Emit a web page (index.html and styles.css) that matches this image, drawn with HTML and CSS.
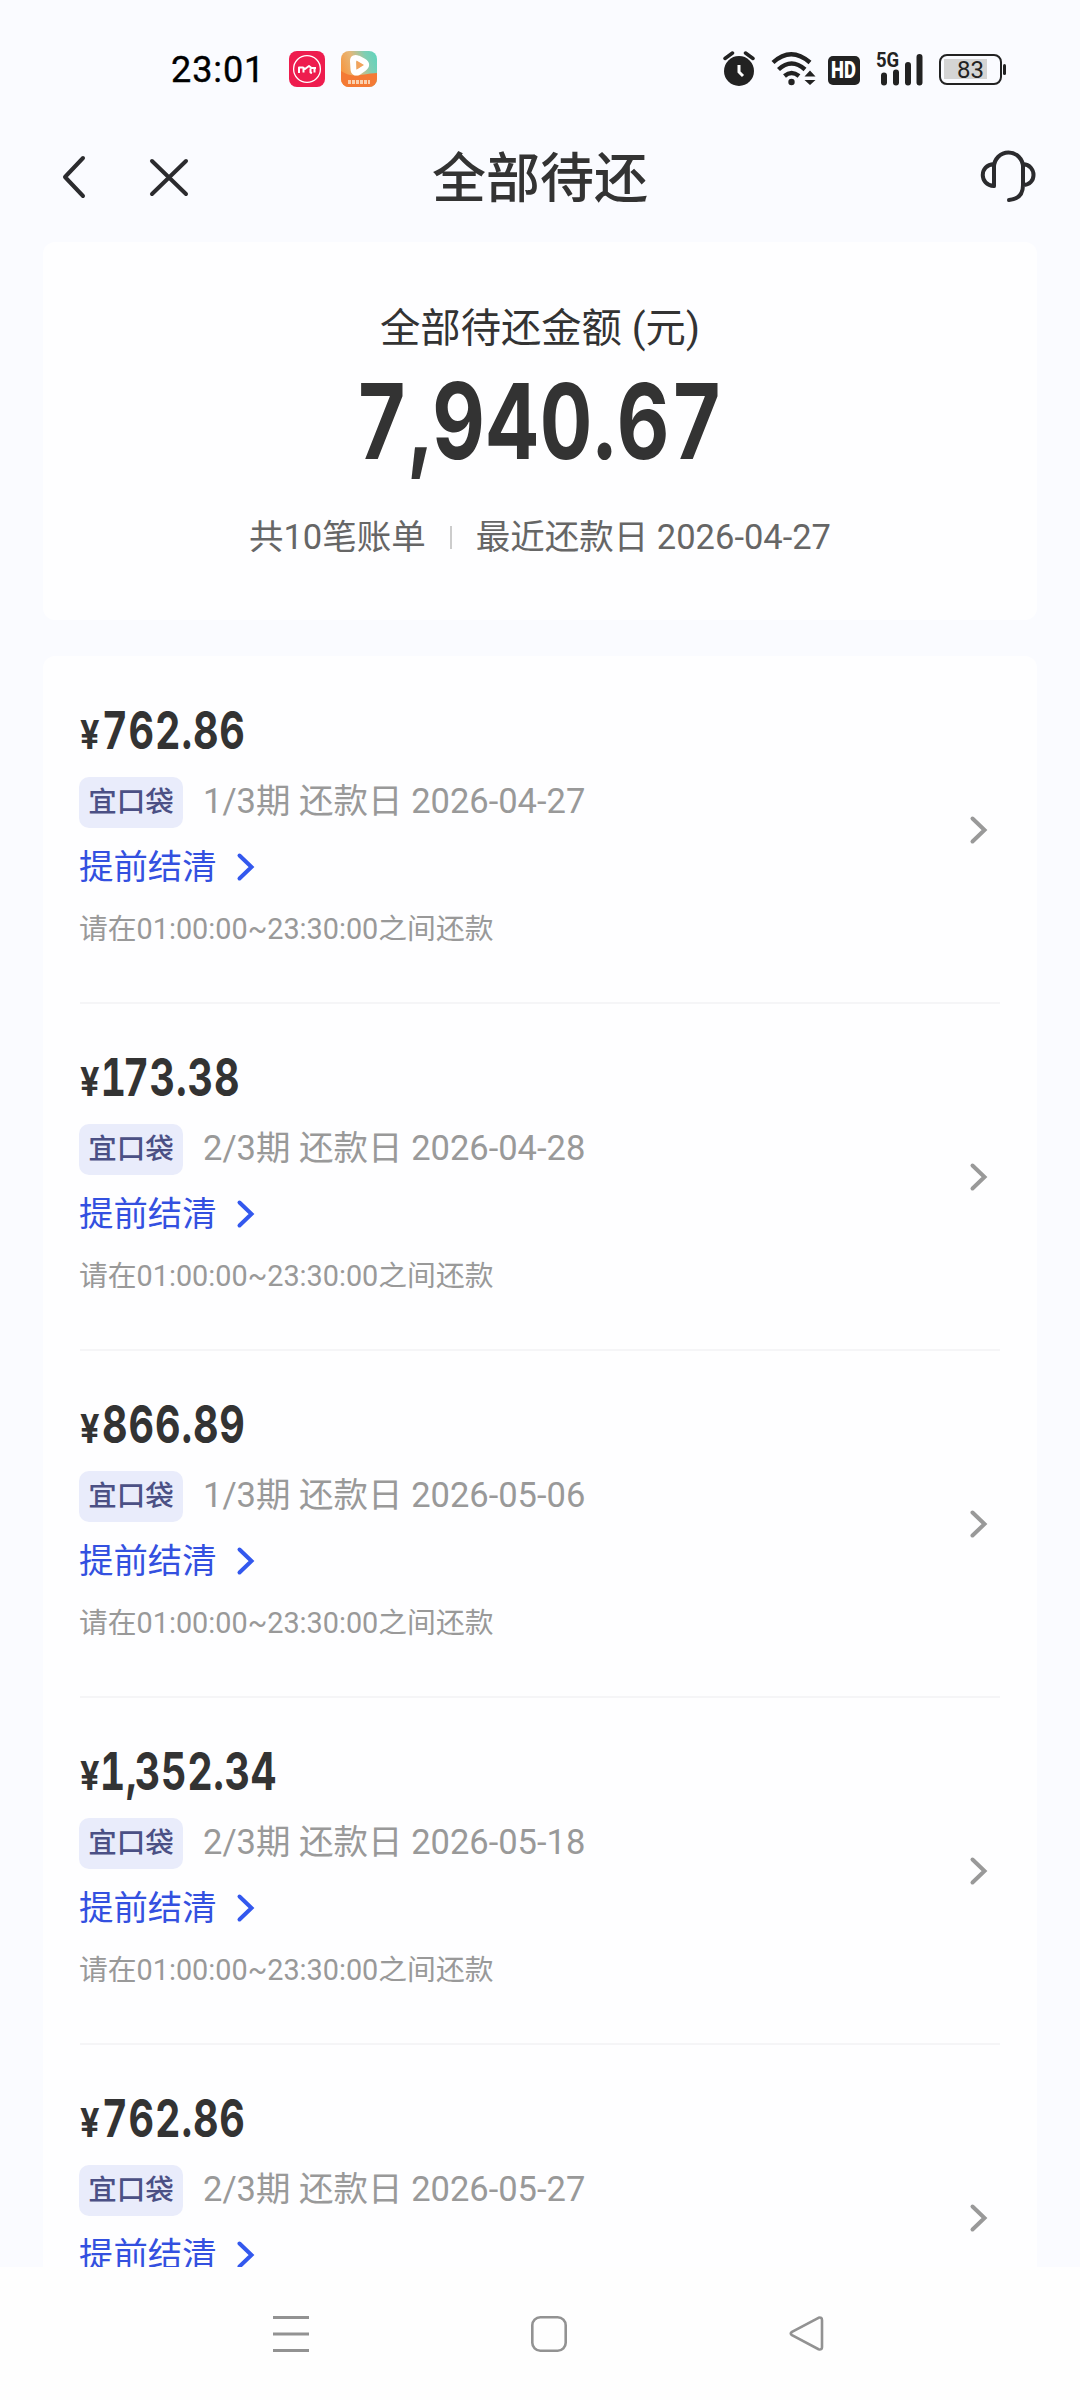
FILE: index.html
```
<!DOCTYPE html>
<html lang="zh-CN">
<head>
<meta charset="utf-8">
<title>全部待还</title>
<link rel="stylesheet" href="styles.css">
</head>
<body>
<svg class="defs" width="0" height="0">
  <symbol id="chevron" viewBox="0 0 20 32"><path d="M3.5 4.5 15.500 16 3.500 27.500" fill="none" stroke="currentColor" stroke-width="4" stroke-linecap="round" stroke-linejoin="miter"/></symbol>
</svg>
<div class="screen">
  <div class="status">
    <span class="clock">23:01</span>
    <svg class="app-pink" width="36" height="36" viewBox="0 0 36 36">
      <rect width="36" height="36" rx="8" fill="#ee1c4e"/>
      <circle cx="18" cy="18" r="13.400" fill="none" stroke="#fff" stroke-width="1.300"/>
      <path d="M10 22v-5.500h4l2 1.500 4-3 2.500 2H27M14.500 17v4.500M21.500 17.500v4l1.500.500M25.500 17v4.500" fill="none" stroke="#fff" stroke-width="2" stroke-linejoin="round"/>
    </svg>
    <svg class="app-orange" width="36" height="36" viewBox="0 0 36 36">
      <defs><linearGradient id="sun" x1="0" y1=".6" x2="1" y2=".2"><stop offset="0" stop-color="#f8943c"/><stop offset=".4" stop-color="#e6b778"/><stop offset=".75" stop-color="#7fceb4"/><stop offset="1" stop-color="#63d3bc"/></linearGradient>
      <clipPath id="tile"><rect width="36" height="36" rx="8"/></clipPath></defs>
      <g clip-path="url(#tile)"><rect width="36" height="36" fill="url(#sun)"/>
      <path d="M0 20q9 6 20 4t16-2v14H0z" fill="#f47a35"/></g>
      <path d="M12 10c0-3 2-3.500 5-2.500l5.500 3c3.500 2 3.500 4.500 0 7l-5 3.500c-3 1.500-5 0-5-3z" fill="none" stroke="#fff" stroke-width="6" stroke-linejoin="round"/>
      <path d="M15.500 9.500v9l7.500-4.500z" fill="#f3a35c"/>
      <path d="M7 31h22" stroke="#fbd0ae" stroke-width="4" stroke-dasharray="3 1"/>
    </svg>
    <div class="status-right">
      <svg width="32" height="36" viewBox="0 0 32 36"><circle cx="16" cy="20" r="15" fill="#222"/><path d="M2 7.500 9.500 2M22.500 2 30 7.500" stroke="#222" stroke-width="3.500" stroke-linecap="round"/><path d="M16 14v7l4 4" fill="none" stroke="#fff" stroke-width="3"/></svg>
      <svg class="wifi" width="46" height="36" viewBox="0 0 46 36"><g fill="none" stroke="#222" stroke-width="4.400"><path d="M2 11.500q18-16.500 37 0"/><path d="M7.500 18.500q13-12 26.500 0"/><path d="M13.500 25q7-6 14.500 0"/></g><circle cx="20.500" cy="31" r="3.200" fill="#222"/><path d="m39 19.500 5.500 6h-11zM39 34l-5.500-5h11z" fill="#222"/></svg>
      <span class="hd"><b>HD</b></span>
      <div class="signal">
        <span class="gen">5G</span>
        <svg width="46" height="34" viewBox="0 0 46 34"><path d="M7 23.500v7M19 20.500v10M31 13v17.500M42.500 5v25.500" stroke="#222" stroke-width="6" stroke-linecap="round"/></svg>
      </div>
      <div class="battery"><span>83</span></div>
      <i class="nub"></i>
    </div>
  </div>
  <header class="bar">
    <svg width="30" height="46" viewBox="0 0 30 46"><path d="M25 4 7 23 25 42" fill="none" stroke="#2b2b2e" stroke-width="4" stroke-linecap="round" stroke-linejoin="round"/></svg>
    <svg class="close" width="42" height="42" viewBox="0 0 42 42"><path d="m4 5 34 33M38 5 4 38" stroke="#2b2b2e" stroke-width="4" stroke-linecap="round"/></svg>
    <h1>全部待还</h1>
    <svg class="service" width="56" height="56" viewBox="0 0 56 56"><path d="M14 38V19a14.500 14.500 0 0 1 29 0v18q0 14-14 15M14 38C-1 37-1 17 14 16M43 16c14 1 14 21 0 21" fill="none" stroke="#2b2b2e" stroke-width="4" stroke-linecap="round" stroke-linejoin="round"/></svg>
  </header>
  <main>
    <section class="card summary">
      <p class="label">全部待还金额 (元)</p>
      <p class="total">7,940.67</p>
      <p class="meta"><span>共10笔账单</span><i></i><span>最近还款日 2026-04-27</span></p>
    </section>
    <section class="card bills">
      <article class="bill">
        <div class="body">
          <p class="amount"><small>¥</small><b>762.86</b></p>
          <p class="term"><span class="tag">宜口袋</span><span>1/3期 还款日 2026-04-27</span></p>
          <p class="settle">提前结清<svg width="20" height="32"><use href="#chevron"/></svg></p>
          <p class="note">请在01:00:00~23:30:00之间还款</p>
        </div>
        <svg class="go" width="20" height="32"><use href="#chevron"/></svg>
      </article>
      <article class="bill">
        <div class="body">
          <p class="amount"><small>¥</small><b class="one">173.38</b></p>
          <p class="term"><span class="tag">宜口袋</span><span>2/3期 还款日 2026-04-28</span></p>
          <p class="settle">提前结清<svg width="20" height="32"><use href="#chevron"/></svg></p>
          <p class="note">请在01:00:00~23:30:00之间还款</p>
        </div>
        <svg class="go" width="20" height="32"><use href="#chevron"/></svg>
      </article>
      <article class="bill">
        <div class="body">
          <p class="amount"><small>¥</small><b>866.89</b></p>
          <p class="term"><span class="tag">宜口袋</span><span>1/3期 还款日 2026-05-06</span></p>
          <p class="settle">提前结清<svg width="20" height="32"><use href="#chevron"/></svg></p>
          <p class="note">请在01:00:00~23:30:00之间还款</p>
        </div>
        <svg class="go" width="20" height="32"><use href="#chevron"/></svg>
      </article>
      <article class="bill">
        <div class="body">
          <p class="amount"><small>¥</small><b class="thousand">1,352.34</b></p>
          <p class="term"><span class="tag">宜口袋</span><span>2/3期 还款日 2026-05-18</span></p>
          <p class="settle">提前结清<svg width="20" height="32"><use href="#chevron"/></svg></p>
          <p class="note">请在01:00:00~23:30:00之间还款</p>
        </div>
        <svg class="go" width="20" height="32"><use href="#chevron"/></svg>
      </article>
      <article class="bill">
        <div class="body">
          <p class="amount"><small>¥</small><b>762.86</b></p>
          <p class="term"><span class="tag">宜口袋</span><span>2/3期 还款日 2026-05-27</span></p>
          <p class="settle">提前结清<svg width="20" height="32"><use href="#chevron"/></svg></p>
        </div>
        <svg class="go" width="20" height="32"><use href="#chevron"/></svg>
      </article>
    </section>
  </main>
  <nav class="nav">
    <svg width="40" height="40" viewBox="0 0 40 40"><path d="M2 3.500h36M2 20h36M2 36.500h36" stroke="#929292" stroke-width="3"/></svg>
    <svg width="40" height="40" viewBox="0 0 40 40"><rect x="3.300" y="3.300" width="33.400" height="33.400" rx="8" fill="none" stroke="#929292" stroke-width="2.600"/></svg>
    <svg width="40" height="40" viewBox="0 0 40 40"><path d="M31.500 3.800 5 17.800q-2.500 1.700 0 3.400l26.500 14q3.500 1 3.500-2v-27q0-3.400-3.500-2.400z" fill="none" stroke="#929292" stroke-width="2.600"/></svg>
  </nav>
</div>
</body>
</html>
```
FILE: styles.css
```
* { box-sizing: border-box; }
body, p, h1 { margin: 0; }
body { background: #fafbff; font-family: Roboto, "Noto Sans CJK SC", sans-serif; color: #333; }
svg { display: block; flex: none; }
.defs { position: absolute; }
.screen { width: 1080px; height: 2400px; display: flex; flex-direction: column; overflow: hidden; }

.status { height: 138px; flex: none; display: flex; align-items: center; padding: 0 74px 0 171px; }
.clock { width: 118px; margin-top: 2px; font-size: 36px; line-height: 40px; color: #000; letter-spacing: 0.9px; -webkit-text-stroke: 0.4px #000; }
.app-orange { margin-left: 16px; }
.status-right { margin-left: auto; display: flex; align-items: center; }
.wifi { margin-left: 16px; }
.hd { width: 32px; height: 29px; margin: 2px 0 0 11px; border-radius: 5px; background: #222; color: #fff; font: 700 23px/29px Roboto, sans-serif; display: flex; justify-content: center; }
.hd b { transform: scaleX(.8); }
.signal { width: 46px; height: 34px; margin-left: 17px; position: relative; }
.gen { position: absolute; left: -1px; top: -1px; font: 700 21px/18px Roboto, sans-serif; color: #222; transform: scaleX(.88); transform-origin: left; }
.battery { width: 63px; height: 31px; margin-left: 16px; border: 2.500px solid #222; border-radius: 8px; padding: 3px; text-align: center; font-size: 24px; color: #222; background: linear-gradient(#d4d4d4, #d4d4d4) 3px 3px / 43px 20px no-repeat; }
.battery span { display: block; line-height: 23px; }
.nub { width: 3px; height: 11px; margin-left: 1px; border-radius: 2px; background: #222; }

.bar { height: 104px; flex: none; display: flex; align-items: center; padding: 0 44px 26px 58px; }
.close { margin-left: 60px; }
h1 { margin: 6px 0 0 242px; font-size: 54px; line-height: 64px; font-weight: 500; }
.service { margin-left: auto; margin-top: -2px; }

main { flex: 1; min-height: 0; overflow: hidden; display: flex; flex-direction: column; gap: 36px; padding: 0 43px; }
.card { flex: none; border-radius: 12px; background: #fefeff; }
.summary { height: 378px; display: flex; flex-direction: column; align-items: center; padding-top: 62px; }
.label { font-size: 40.300px; line-height: 50px; }
.total { margin-top: 14px; font: 700 105px/105px Inter, sans-serif; font-variant-numeric: tabular-nums; letter-spacing: 1.500px; transform: scaleX(.775); }
.meta { margin-top: 42px; display: flex; align-items: center; font-size: 34.500px; line-height: 44px; color: #666; }
.meta i { width: 2px; height: 23px; margin: 0 24px; background: #ccc; }

.bills { padding-top: 1px; }
.bill { height: 347px; margin: 0 37px; display: flex; justify-content: space-between; border-bottom: 2px solid #f5f5f7; padding-top: 48px; }
.amount { height: 52px; display: flex; align-items: baseline; font: 700 52px/52px Inter, sans-serif; font-variant-numeric: tabular-nums; }
.amount small { width: 22px; font-size: 39px; transform: scaleX(.88); transform-origin: left; }
.amount b { font-weight: 650; letter-spacing: 1.200px; transform: scaleX(.76); transform-origin: left; }
.amount .one::first-letter { margin-left: -2px; margin-right: -5px; }
.amount .thousand { letter-spacing: 0.800px; }
.amount .thousand::first-letter { margin-left: -3px; margin-right: -3px; }
.term { height: 51px; margin-top: 20px; display: flex; align-items: center; font-size: 34.500px; line-height: 46px; color: #999; }
.term span:last-child { margin-top: -4px; }
.tag { width: 104px; height: 51px; margin: 0 20px 0 -1px; border-radius: 10px; background: #e9ecfb; color: #4b5085; font-size: 28.500px; font-weight: 500; line-height: 51px; text-align: center; }
.settle { height: 40px; margin: 16px 0 0 -1px; display: flex; align-items: center; gap: 19px; font-size: 34.400px; color: #3350e0; }
.settle svg { color: #3358ee; margin-top: 5px; }
.note { margin: 27px 0 0 -1px; font-size: 28.800px; line-height: 36px; color: #999; }
.go { margin: 109px 11px 0 0; color: #999; }

.nav { height: 133px; flex: none; display: flex; justify-content: center; gap: 218px; padding: 47px 0 0 18px; background: #fefefe; }
```
